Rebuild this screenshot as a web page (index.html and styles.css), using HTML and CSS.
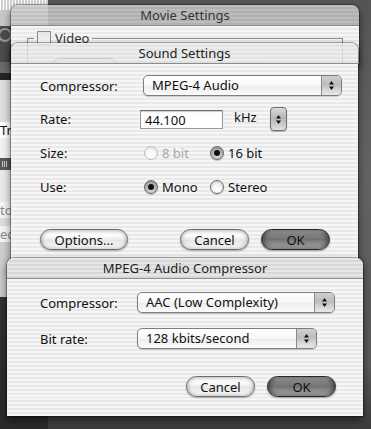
FILE: index.html
```html
<!DOCTYPE html>
<html lang="en">
<head>
  <meta charset="UTF-8">
  <title>Movie Settings</title>
  <link rel="stylesheet" href="styles.css">
</head>
<body>
  <div class="desktop">
    <!-- app window peeking out on the left -->
    <div class="backwin">
      <div class="bw bw-grid"></div>
      <div class="bw bw-gray"></div>
      <div class="bw bw-dark"><span class="ring"></span></div>
      <div class="bw bw-mid"></div>
      <div class="bw bw-black"></div>
      <div class="bw bw-light"></div>
      <div class="bw bw-text">Track</div>
      <div class="bw bw-white"></div>
      <div class="bw bw-bar"><span class="tiny-grid"></span></div>
      <div class="bw bw-pale"></div>
      <div class="bw bw-text bw-dim">to</div>
      <div class="bw bw-rule"></div>
      <div class="bw bw-text bw-dim">ed</div>
      <div class="bw bw-gray2"></div>
      <div class="bw bw-shadow"></div>
    </div>

    <div class="win movie">
      <div class="titlebar movie-title">Movie Settings</div>
      <div class="win-body">
        <fieldset class="group">
          <legend class="group-head"><span class="checkbox"></span>Video</legend>
          <div class="group-row">
            <div class="btn btn-ghost"></div>
            <span class="ghost-line"></span>
          </div>
        </fieldset>
      </div>
    </div>

    <div class="win sound">
      <div class="titlebar sound-title">Sound Settings</div>
      <div class="win-body sound-form">
        <div class="row row-first">
          <span class="label">Compressor:</span>
          <div class="popup popup-sound">
            <span class="popup-label">MPEG-4 Audio</span>
            <span class="popup-arrows">
              <svg width="5" height="9" viewBox="0 0 5 9"><path d="M2.5 0L5 3.5H0Z M0 5.5H5L2.5 9Z" fill="#111"/></svg>
            </span>
          </div>
        </div>
        <div class="row">
          <span class="label">Rate:</span>
          <div class="field">44.100</div>
          <span class="unit">kHz</span>
          <div class="stepper">
            <svg width="5" height="9" viewBox="0 0 5 9"><path d="M2.5 0L5 3.5H0Z M0 5.5H5L2.5 9Z" fill="#111"/></svg>
          </div>
        </div>
        <div class="row">
          <span class="label">Size:</span>
          <span class="choice disabled"><span class="radio"></span>8 bit</span>
          <span class="choice"><span class="radio on"></span>16 bit</span>
        </div>
        <div class="row">
          <span class="label">Use:</span>
          <span class="choice"><span class="radio on"></span>Mono</span>
          <span class="choice"><span class="radio"></span>Stereo</span>
        </div>
        <div class="buttons sound-buttons">
          <div class="btn btn-options">Options...</div>
          <div class="spacer"></div>
          <div class="btn">Cancel</div>
          <div class="btn btn-default">OK</div>
        </div>
      </div>
    </div>

    <div class="win mpeg">
      <div class="titlebar">MPEG-4 Audio Compressor</div>
      <div class="win-body mpeg-form">
        <div class="mrow">
          <span class="label mlabel">Compressor:</span>
          <div class="popup popup-codec">
            <span class="popup-label">AAC (Low Complexity)</span>
            <span class="popup-arrows">
              <svg width="5" height="9" viewBox="0 0 5 9"><path d="M2.5 0L5 3.5H0Z M0 5.5H5L2.5 9Z" fill="#111"/></svg>
            </span>
          </div>
        </div>
        <div class="mrow">
          <span class="label mlabel">Bit rate:</span>
          <div class="popup popup-rate">
            <span class="popup-label">128 kbits/second</span>
            <span class="popup-arrows">
              <svg width="5" height="9" viewBox="0 0 5 9"><path d="M2.5 0L5 3.5H0Z M0 5.5H5L2.5 9Z" fill="#111"/></svg>
            </span>
          </div>
        </div>
        <div class="buttons mpeg-buttons">
          <div class="btn">Cancel</div>
          <div class="btn btn-default">OK</div>
        </div>
      </div>
    </div>
  </div>
</body>
</html>
```

FILE: styles.css
```css
body {
  margin: 0;
  background: #555;
  font-family: "Noto Sans", "Open Sans", sans-serif;
  font-size: 13px;
  color: #111;
}
.desktop {
  position: relative;
  width: 371px;
  height: 429px;
  overflow: hidden;
  background: linear-gradient(to bottom, #555 0%, #636363 40%, #5a5a5a 85%, #3c3c3c 100%);
}

/* window behind, only the left strip shows */
.backwin {
  position: absolute;
  left: 0;
  top: 0;
  width: 48px;
  height: 429px;
  display: flex;
  flex-direction: column;
}
.bw {
  flex: none;
  overflow: hidden;
  white-space: nowrap;
}
.bw-grid {
  height: 10px;
  background:
    repeating-linear-gradient(to right, #fff 0 1px, transparent 1px 3px),
    #d2d2d2;
}
.bw-gray { height: 16px; background: #c8c8c8; }
.bw-dark {
  height: 36px;
  background: #4c4c4c;
  padding-top: 2px;
  box-sizing: border-box;
}
.ring {
  display: block;
  width: 10px;
  height: 10px;
  margin-left: -2px;
  border: 2px solid #9a9a9a;
  border-radius: 50%;
}
.bw-mid { height: 11px; background: #6c6c6c; }
.bw-black { height: 7px; background: #262626; }
.bw-light { height: 42px; background: #dedede; }
.bw-text {
  height: 16px;
  line-height: 16px;
  background: #fff;
  color: #111;
}
.bw-dim { color: #888; background: #f4f4f4; }
.bw-white { height: 20px; background: #f2f2f2; }
.bw-bar {
  height: 12px;
  background: #585858;
  padding: 3px 0 0 2px;
  box-sizing: border-box;
}
.tiny-grid {
  display: block;
  width: 6px;
  height: 6px;
  background: repeating-linear-gradient(to right, #ccc 0 1px, transparent 1px 2px);
}
.bw-pale { height: 32px; background: #e9e9e9; }
.bw-rule { height: 8px; background: #dcdcdc; }
.bw-gray2 { height: 55px; background: #cdcdcd; }
.bw-shadow { flex: 1; background: linear-gradient(to bottom, #333, #2a2a2a); }

/* windows */
.win {
  position: absolute;
  border-radius: 7px 7px 0 0;
  box-shadow: 0 0 0 1px rgba(0,0,0,0.3), 0 4px 9px rgba(0,0,0,0.55);
}
.movie { left: 11px; top: 5px; width: 348px; height: 59px; }
.sound { left: 11px; top: 43px; width: 347px; height: 230px; }
.mpeg {
  left: 7px;
  top: 258px;
  width: 356px;
  height: 158px;
  background: repeating-linear-gradient(to bottom, #f6f6f6 0 2px, #e9e9e9 2px 4px);
}
.win-body {
  background: repeating-linear-gradient(to bottom, #f6f6f6 0 2px, #e9e9e9 2px 4px);
}

.titlebar {
  height: 20px;
  line-height: 20px;
  border-bottom: 1px solid #8c8c8c;
  border-radius: 7px 7px 0 0;
  text-align: center;
  color: #222;
  background: repeating-linear-gradient(to bottom, #e6e6e6 0 2px, #d8d8d8 2px 4px);
}
.movie-title {
  color: #333;
  background: repeating-linear-gradient(to bottom, rgba(206,206,206,0.85) 0 2px, rgba(192,192,192,0.85) 2px 4px);
}
.sound-title {
  background: repeating-linear-gradient(to bottom, rgba(236,236,236,0.8) 0 2px, rgba(224,224,224,0.8) 2px 4px);
}
.sound .win-body {
  height: 209px;
}
.movie .win-body {
  height: 38px;
  overflow: hidden;
  padding-top: 5px;
  box-sizing: border-box;
}

/* movie settings video group */
.group {
  margin: 0 16px;
  padding: 0 10px 20px;
  border: 1px solid #8f8f8f;
  min-width: 0;
}
.group-head {
  display: flex;
  align-items: center;
  gap: 4px;
  margin-left: -4px;
  padding: 0 3px;
  color: #333;
  height: 14px;
}
.checkbox {
  width: 12px;
  height: 12px;
  border: 1px solid #8a8a8a;
  background: linear-gradient(#e4e4e4, #fafafa);
}
.group-row {
  display: flex;
  align-items: flex-start;
  gap: 16px;
  margin: 13px 0 0 12px;
}
.btn-ghost { width: 85px; }
.ghost-line {
  width: 130px;
  height: 6px;
  margin-top: 4px;
  background: repeating-linear-gradient(to right, #999 0 5px, transparent 5px 7px);
  opacity: 0.5;
}

/* sound settings form */
.sound-form {
  padding: 5px 16px 0 29px;
  box-sizing: border-box;
}
.row {
  display: flex;
  align-items: center;
  height: 34px;
}
.row-first { height: 33px; }
.label {
  flex: none;
  width: 103px;
  color: #111;
}
.popup {
  display: flex;
  height: 21px;
  box-sizing: border-box;
  border: 1px solid #7d7d7d;
  border-radius: 5px;
  background: linear-gradient(to bottom, #ffffff 0%, #f7f7f7 50%, #ececec 51%, #fbfbfb 100%);
  box-shadow: 0 1px 1px rgba(0,0,0,0.18);
}
.popup-sound { width: 199px; }
.popup-codec { width: 198px; }
.popup-rate { width: 180px; }
.popup-label {
  flex: 1;
  padding-left: 8px;
  line-height: 19px;
  color: #111;
}
.popup-arrows {
  width: 19px;
  display: flex;
  align-items: center;
  justify-content: center;
  border-left: 1px solid #8a8a8a;
  border-radius: 0 4px 4px 0;
  background: linear-gradient(to bottom, #cfcfcf 0%, #bdbdbd 45%, #d8d8d8 75%, #e8e8e8 100%);
}
.field {
  width: 83px;
  height: 19px;
  box-sizing: border-box;
  margin-left: -3px;
  padding-left: 4px;
  line-height: 18px;
  background: #fff;
  border: 1px solid #9a9a9a;
  border-top-color: #6a6a6a;
  box-shadow: inset 0 1px 1px rgba(0,0,0,0.2);
}
.unit {
  width: 36px;
  margin: 0 0 4px 11px;
}
.stepper {
  width: 17px;
  height: 24px;
  box-sizing: border-box;
  display: flex;
  align-items: center;
  justify-content: center;
  border: 1px solid #6e6e6e;
  border-radius: 4px;
  background: linear-gradient(to bottom, #dadada 0%, #b6b6b6 45%, #c6c6c6 70%, #e2e2e2 100%);
  box-shadow: 0 1px 1px rgba(0,0,0,0.25);
}
.choice {
  display: flex;
  align-items: center;
  gap: 4px;
  width: 66px;
  margin-left: 1px;
  flex: none;
}
.choice + .choice { margin-left: 0; }
.choice.disabled { color: #a8a8a8; }
.radio {
  position: relative;
  width: 14px;
  height: 14px;
  box-sizing: border-box;
  border-radius: 50%;
  border: 1px solid #6c6c6c;
  background: radial-gradient(circle at 50% 70%, #ffffff 0%, #f2f2f2 45%, #c4c4c4 100%);
  box-shadow: 0 1px 1px rgba(0,0,0,0.2);
}
.disabled .radio {
  border-color: #bdbdbd;
  background: radial-gradient(circle at 50% 70%, #fff 0%, #f6f6f6 50%, #e0e0e0 100%);
  box-shadow: none;
}
.radio.on {
  background: radial-gradient(circle at 50% 70%, #e6e6e6 0%, #a8a8a8 60%, #7c7c7c 100%);
}
.radio.on::after {
  content: "";
  position: absolute;
  left: 3px;
  top: 3px;
  width: 6px;
  height: 6px;
  border-radius: 50%;
  background: #111;
}

/* push buttons */
.buttons {
  display: flex;
  align-items: center;
  gap: 12px;
}
.sound-buttons {
  margin: 25px 12px 0 0;
}
.spacer { flex: 1; }
.btn {
  flex: none;
  width: 69px;
  height: 21px;
  box-sizing: border-box;
  display: flex;
  align-items: center;
  justify-content: center;
  border: 1px solid #6a6a6a;
  border-radius: 11px;
  color: #111;
  background: linear-gradient(to bottom, #f4f4f4 0%, #fdfdfd 30%, #e6e6e6 55%, #f2f2f2 80%, #ffffff 100%);
  box-shadow: inset 0 0 4px rgba(0,0,0,0.35), 0 1px 2px rgba(0,0,0,0.3);
}
.btn-options { width: 88px; }
.btn-default {
  border-color: #262626;
  background: linear-gradient(to bottom, #c4c4c4 0%, #888 22%, #727272 50%, #9a9a9a 80%, #cfcfcf 100%);
  box-shadow: inset 0 0 5px 1px rgba(0,0,0,0.6), 0 1px 2px rgba(0,0,0,0.35);
}

/* mpeg-4 audio compressor */
.mpeg-form {
  padding: 13px 0 0 33px;
}
.mrow {
  display: flex;
  align-items: center;
  height: 21px;
}
.mrow + .mrow { margin-top: 15px; }
.mlabel { width: 97px; }
.mpeg-buttons {
  justify-content: flex-end;
  margin: 27px 27px 0 0;
}
```
